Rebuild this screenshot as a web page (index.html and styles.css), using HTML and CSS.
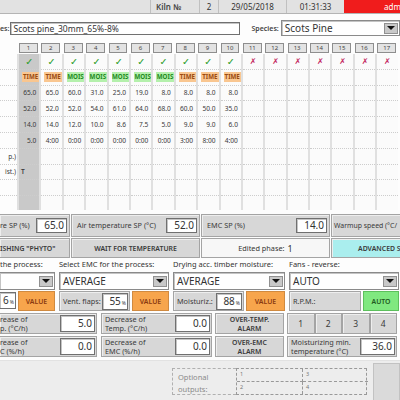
FILE: index.html
```html
<!DOCTYPE html>
<html lang="en">
<head>
  <meta charset="UTF-8" />
  <meta name="viewport" content="width=device-width, initial-scale=1.0"/>
  <title>Kiln Control</title>
  <link rel="stylesheet" href="styles.css">
</head>
<body>

  <div class="top-bar">
    <div class="tb-blank"></div>
    <div class="tb-cell tb-kiln">Kiln №</div>
    <div class="tb-cell tb-num">2</div>
    <div class="tb-cell tb-date">29/05/2018</div>
    <div class="tb-cell tb-time">01:31:33</div>
    <div class="tb-user">admin</div>
  </div>

  <div class="recipe-bar">
    <span class="bar-label">es:</span>
    <div class="field recipe-name">Scots pine_30mm_65%-8%</div>
    <span class="bar-label species-label">Species:</span>
    <div class="select species"><span class="select-text">Scots Pine</span><span class="arrow"></span></div>
  </div>

  <div class="phases" id="phases">
    <div class="phase-labels">
      <div class="phase-num"></div>
      <div class="cell"></div>
      <div class="cell"></div>
      <div class="cell"></div>
      <div class="cell"></div>
      <div class="cell"></div>
      <div class="cell"></div>
      <div class="cell">p.)</div>
      <div class="cell">ist.)</div>
      <div class="cell"></div>
      <div class="cell last"></div>
    </div>
  </div>

  <div class="sp-row">
    <div class="panel sp first">
      <span class="panel-label">re SP (%)</span>
      <div class="field num">65.0</div>
    </div>
    <div class="panel sp">
      <span class="panel-label">Air temperature SP (°C)</span>
      <div class="field num">52.0</div>
    </div>
    <div class="panel sp">
      <span class="panel-label">EMC SP (%)</span>
      <div class="field num">14.0</div>
    </div>
    <div class="panel sp warmup">
      <span class="panel-label">Warmup speed (°C/</span>
    </div>
  </div>

  <div class="action-row">
    <div class="btn first">ISHING "PHYTO"</div>
    <div class="btn">WAIT FOR TEMPERATURE</div>
    <div class="phase-info"><span>Edited phase:</span> <b>1</b></div>
    <div class="btn advanced">ADVANCED S</div>
  </div>

  <div class="process-grid">
    <div class="proc-label">the process:</div>
    <div class="proc-label">Select EMC for the process:</div>
    <div class="proc-label">Drying acc. timber moisture:</div>
    <div class="proc-label">Fans - reverse:</div>

    <div class="select first"><span class="select-text"></span><span class="arrow"></span></div>
    <div class="select"><span class="select-text">AVERAGE</span><span class="arrow"></span></div>
    <div class="select"><span class="select-text">AVERAGE</span><span class="arrow"></span></div>
    <div class="select"><span class="select-text">AUTO</span><span class="arrow"></span></div>

    <div class="ctrl">
      <div class="field pct first">6<small>%</small></div>
      <div class="btn value">VALUE</div>
    </div>
    <div class="ctrl">
      <div class="panel ctrl-panel">
        <span class="panel-label">Vent. flaps:</span>
        <div class="field pct">55<small>%</small></div>
      </div>
      <div class="btn value">VALUE</div>
    </div>
    <div class="ctrl">
      <div class="panel ctrl-panel">
        <span class="panel-label">Moisturiz.:</span>
        <div class="field pct">88<small>%</small></div>
      </div>
      <div class="btn value wide">VALUE</div>
    </div>
    <div class="ctrl">
      <div class="panel ctrl-panel rpm">
        <span class="panel-label">R.P.M.:</span>
      </div>
      <div class="btn auto">AUTO</div>
    </div>
  </div>

  <div class="rate-grid">
    <div class="panel rate first">
      <span class="panel-label">rease of<br>p. (°C/h)</span>
      <div class="field num">5.0</div>
    </div>
    <div class="panel rate">
      <span class="panel-label">Decrease of<br>Temp. (°C/h)</span>
      <div class="field num">0.0</div>
    </div>
    <div class="btn alarm">OVER-TEMP.<br>ALARM</div>
    <div class="fan-steps">
      <div class="btn step">1</div>
      <div class="btn step">2</div>
      <div class="btn step">3</div>
      <div class="btn step">4</div>
    </div>

    <div class="panel rate first">
      <span class="panel-label">rease of<br>C (%/h)</span>
      <div class="field num">0.0</div>
    </div>
    <div class="panel rate">
      <span class="panel-label">Decrease of<br>EMC (%/h)</span>
      <div class="field num">0.0</div>
    </div>
    <div class="btn alarm">OVER-EMC<br>ALARM</div>
    <div class="panel rate">
      <span class="panel-label">Moisturizing min.<br>temperature (°C)</span>
      <div class="field num">36.0</div>
    </div>
  </div>

  <div class="footer">
    <div class="outputs-label">Optional<br>outputs:</div>
    <div class="outputs">
      <div>1</div><div>3</div>
      <div>2</div><div>4</div>
    </div>
    <div class="footer-btn"></div>
  </div>

  <script>
    const phasesEl = document.getElementById('phases');

    // program phases: mode, temperature, humidity, EMC, time / moisture target
    const phases = [
      { mode: 'TIME', vals: ['65.0', '52.0', '14.0', '5.0'], note: 'T' },
      { mode: 'TIME', vals: ['65.0', '52.0', '14.0', '4:00'] },
      { mode: 'MOIS', vals: ['60.0', '52.0', '12.0', '0:00'] },
      { mode: 'MOIS', vals: ['31.0', '54.0', '10.0', '0:00'] },
      { mode: 'MOIS', vals: ['25.0', '61.0', '8.6', '0:00'] },
      { mode: 'MOIS', vals: ['19.0', '64.0', '7.5', '0:00'] },
      { mode: 'MOIS', vals: ['8.0', '68.0', '5.0', '0:00'] },
      { mode: 'TIME', vals: ['8.0', '60.0', '9.0', '3:00'] },
      { mode: 'TIME', vals: ['8.0', '50.0', '9.0', '8:00'] },
      { mode: 'TIME', vals: ['8.0', '35.0', '6.0', '4:00'] }
    ];

    for (let i = 0; i < 17; i++) {
      const p = phases[i];
      const col = document.createElement('div');
      col.className = 'phase' + (i === 0 ? ' current' : '');

      let html = `<div class="phase-num"><span>${i + 1}</span></div><div class="phase-body">`;
      html += p
        ? '<div class="cell mark ok">✓</div>'
        : '<div class="cell mark off">✗</div>';
      html += p
        ? `<div class="cell"><span class="mode ${p.mode.toLowerCase()}">${p.mode}</span></div>`
        : '<div class="cell"></div>';
      for (let r = 0; r < 4; r++) {
        html += `<div class="cell">${p ? p.vals[r] : ''}</div>`;
      }
      html += '<div class="cell"></div>';
      html += `<div class="cell note">${p && p.note ? p.note : ''}</div>`;
      html += '<div class="cell"></div><div class="cell last"></div></div>';

      col.innerHTML = html;
      phasesEl.appendChild(col);
    }
  </script>

</body>
</html>
```

FILE: styles.css
```css
body {
  font-family: 'Noto Sans', 'DejaVu Sans', sans-serif;
  background: #fdfdfd;
  color: #333;
  margin: 0;
  width: 400px;
  height: 400px;
  overflow: hidden;
}

/* top status bar */
.top-bar {
  display: flex;
  height: 13px;
  background: #e2e2e2;
  border-bottom: 1px solid #b4b4b4;
  font-size: 8px;
  line-height: 13px;
  white-space: nowrap;
}
.tb-blank {
  width: 150px;
  flex: none;
  border-right: 1px solid #c0c0c0;
}
.tb-cell {
  flex: none;
  border-right: 1px solid #c0c0c0;
}
.tb-kiln {
  width: 43px;
  padding-left: 5px;
  font-weight: 600;
  color: #444;
}
.tb-num {
  width: 18px;
  text-align: center;
}
.tb-date {
  width: 67px;
  text-align: center;
}
.tb-time {
  width: 57px;
  text-align: center;
  border-right: 0;
}
.tb-user {
  flex: 1;
  background: #f01c1c;
  color: #fff;
  padding-left: 40px;
  overflow: hidden;
}

/* recipe and species */
.recipe-bar {
  display: flex;
  align-items: center;
  height: 28px;
}
.bar-label {
  font-size: 7px;
  font-weight: 600;
  color: #444;
}
.species-label {
  margin-left: 11px;
  margin-right: 2px;
}
.field {
  background: #fff;
  border: 1px solid #707070;
  box-shadow: inset 1px 1px 0 #c4c4c4;
  box-sizing: border-box;
  white-space: nowrap;
  overflow: hidden;
}
.recipe-name {
  width: 230px;
  height: 13px;
  margin-left: 1px;
  margin-top: 1px;
  font-size: 8.5px;
  line-height: 11px;
  padding-left: 2px;
}
.select {
  display: flex;
  align-items: center;
  background: #fff;
  border: 1px solid #8a8a8a;
  box-shadow: inset 1px 1px 0 #c4c4c4;
  box-sizing: border-box;
  height: 18px;
  overflow: hidden;
}
.select-text {
  flex: 1;
  font-size: 10px;
  padding-left: 3px;
  white-space: nowrap;
}
.species {
  width: 119px;
  height: 16px;
}
.arrow {
  width: 14px;
  height: 11px;
  margin-right: 1px;
  flex: none;
  background: #c8c8c8;
  border: 1px solid #909090;
  box-sizing: border-box;
  display: flex;
  align-items: center;
  justify-content: center;
}
.arrow::after {
  content: "";
  border-left: 4px solid transparent;
  border-right: 4px solid transparent;
  border-top: 4px solid #111;
}

/* phase program table */
.phases {
  display: flex;
}
.phase-labels {
  width: 17px;
  flex: none;
}
.phase {
  width: 22.4px;
  flex: none;
}
.phase-num {
  height: 12px;
  padding: 1px 1.5px 1px 2px;
  box-sizing: border-box;
}
.phase-num span {
  display: block;
  height: 10px;
  background: #e3e3e3;
  border: 1px solid #8e8e8e;
  box-sizing: border-box;
  font-size: 6px;
  line-height: 8px;
  text-align: center;
  color: #444;
}
.phase-body {
  border-left: 2px solid #e0e0e0;
  background: #fbfbfb;
}
.phase.current .phase-body {
  background: #c9c9c9;
}
.cell {
  height: 15.8px;
  box-sizing: border-box;
  border-bottom: 1px dotted #cdcdcd;
  display: flex;
  align-items: center;
  justify-content: flex-end;
  padding-right: 3px;
  font-size: 6.6px;
  color: #3a3a3a;
  white-space: nowrap;
}
.cell.last {
  border-bottom: 0;
  height: 14px;
}
.phase-labels .cell {
  padding-right: 1px;
}
.cell.note {
  justify-content: flex-start;
  padding-left: 2px;
  font-weight: 600;
}
.cell.mark {
  justify-content: center;
  padding-right: 0;
  font-family: 'DejaVu Sans', sans-serif;
}
.mark.ok {
  color: #2a9d2a;
  font-size: 9.5px;
  font-weight: bold;
}
.mark.off {
  color: #c3285e;
  font-size: 8px;
  font-style: italic;
}
.mode {
  display: block;
  width: 100%;
  height: 10px;
  margin-right: -3px;
  font-size: 6.2px;
  font-weight: bold;
  line-height: 10px;
  text-align: center;
}
.mode.time {
  background: #f9c690;
  color: #9a4a10;
}
.mode.mois {
  background: #b4f0ac;
  color: #1f8a1f;
}

/* set point panels */
.panel {
  display: flex;
  align-items: center;
  justify-content: space-between;
  background: #d7d7d7;
  border: 1px solid #a4a4a4;
  box-shadow: inset 1px 1px 0 #eeeeee;
  box-sizing: border-box;
  white-space: nowrap;
  overflow: hidden;
}
.panel-label {
  font-size: 7.3px;
  line-height: 9px;
  color: #3a3a3a;
}
.sp-row {
  display: flex;
  gap: 1px;
  margin-top: 4px;
  height: 23px;
}
.panel.sp {
  width: 129px;
  flex: none;
  padding: 0 1px 0 5px;
}
.panel.sp.first {
  width: 70px;
  border-left: 0;
  padding-left: 0;
}
.panel.sp.warmup {
  width: 70px;
  border-right: 0;
  justify-content: flex-start;
  padding-left: 2px;
}
.warmup .panel-label {
  font-size: 6.9px;
}
.field.num {
  height: 15px;
  width: 31px;
  font-size: 10px;
  line-height: 13px;
  text-align: right;
  padding-right: 2px;
}
.sp .field.num {
  margin-right: 1px;
}

/* action buttons */
.btn {
  display: flex;
  align-items: center;
  justify-content: center;
  background: #d7d7d7;
  border: 1px solid #a4a4a4;
  box-shadow: inset 1px 1px 0 #eeeeee;
  box-sizing: border-box;
  font-size: 6.9px;
  font-weight: 600;
  color: #3a3a3a;
  white-space: nowrap;
  overflow: hidden;
}
.action-row {
  display: flex;
  gap: 1px;
  height: 20px;
  margin-top: 1px;
}
.action-row > div {
  width: 129px;
  flex: none;
}
.action-row .btn.first {
  width: 70px;
  border-left: 0;
  justify-content: flex-start;
}
.phase-info {
  display: flex;
  align-items: center;
  justify-content: center;
  gap: 3px;
  background: #f7f7f7;
  border: 1px solid #a4a4a4;
  box-sizing: border-box;
  font-size: 7.3px;
}
.phase-info b {
  font-weight: normal;
  font-size: 9px;
}
.action-row .btn.advanced {
  width: 70px;
  border-right: 0;
  background: #aaeeee;
  justify-content: flex-start;
  padding-left: 26px;
}

/* process selection grid */
.process-grid {
  display: grid;
  grid-template-columns: 55px 110px 112px 110px;
  grid-template-rows: 13px 18px 20px;
  column-gap: 4px;
  row-gap: 1px;
}
.proc-label {
  font-size: 7.5px;
  line-height: 13px;
  white-space: nowrap;
  color: #333;
}
.select.first {
  border-left: 0;
}
.ctrl {
  display: flex;
  gap: 2px;
}
.ctrl-panel {
  flex: 1;
  padding: 0 1px 0 3px;
}
.field.pct {
  width: 26px;
  height: 17px;
  font-size: 10px;
  line-height: 15px;
  text-align: right;
  padding-right: 1px;
}
.field.pct small {
  font-size: 5px;
  margin-left: 1px;
}
.field.pct.first {
  width: 16px;
  border-left: 0;
  margin-top: 1px;
}
.btn.value {
  width: 37px;
  flex: none;
  background: #f7a54c;
  border-color: #d08a40;
  color: #8a3a10;
  box-shadow: none;
}
.btn.value.wide {
  width: 39px;
}
.ctrl:first-child .btn.value {
  width: 39px;
}
.rpm {
  flex: none;
  width: 72px;
}
.btn.auto {
  flex: 1;
  background: #80e880;
  border-color: #5cc05c;
  color: #205a20;
  box-shadow: none;
}

/* rate limits and alarms */
.rate-grid {
  display: grid;
  grid-template-columns: 97px 112px 69px 110px;
  grid-template-rows: 21px 21px;
  column-gap: 3px;
  row-gap: 2px;
  margin-top: 2px;
  margin-bottom: 3px;
}
.rate-grid > .panel:nth-child(2),
.rate-grid > .panel:nth-child(6) {
  margin-left: 1px;
}
.panel.rate {
  padding: 0 1px 0 3px;
}
.panel.rate.first {
  border-left: 0;
  padding-left: 0;
}
.rate .field.num {
  width: 35px;
  height: 17px;
  line-height: 15px;
}
.btn.alarm {
  text-align: center;
  line-height: 9px;
}
.fan-steps {
  display: flex;
}
.btn.step {
  flex: 1;
  font-size: 8.5px;
  font-weight: normal;
}

/* optional outputs */
.footer {
  display: flex;
  align-items: flex-start;
  height: 40px;
  background: #ededed;
  border-top: 1px solid #e2e2e2;
}
.outputs-label {
  margin: 7px 0 0 172px;
  width: 64px;
  height: 27px;
  box-sizing: border-box;
  border: 1px dashed #b0b0b0;
  border-right: 0;
  padding: 2px 0 0 5px;
  font-size: 7.5px;
  line-height: 12px;
  color: #8a8a8a;
}
.outputs {
  margin-top: 7px;
  width: 131px;
  height: 27px;
  box-sizing: border-box;
  display: grid;
  grid-template-columns: 66px 65px;
  border: 1px dashed #999;
}
.outputs div {
  font-size: 5.5px;
  color: #777;
  padding: 1px 0 0 3px;
  border-right: 1px dashed #999;
  border-bottom: 1px dashed #999;
}
.outputs div:nth-child(even) {
  border-right: 0;
}
.outputs div:nth-child(n+3) {
  border-bottom: 0;
}
.footer-btn {
  margin: 2px 0 0 6px;
  flex: 1;
  height: 40px;
  background: #dadada;
  border: 1px solid #c2c2c2;
}
```
